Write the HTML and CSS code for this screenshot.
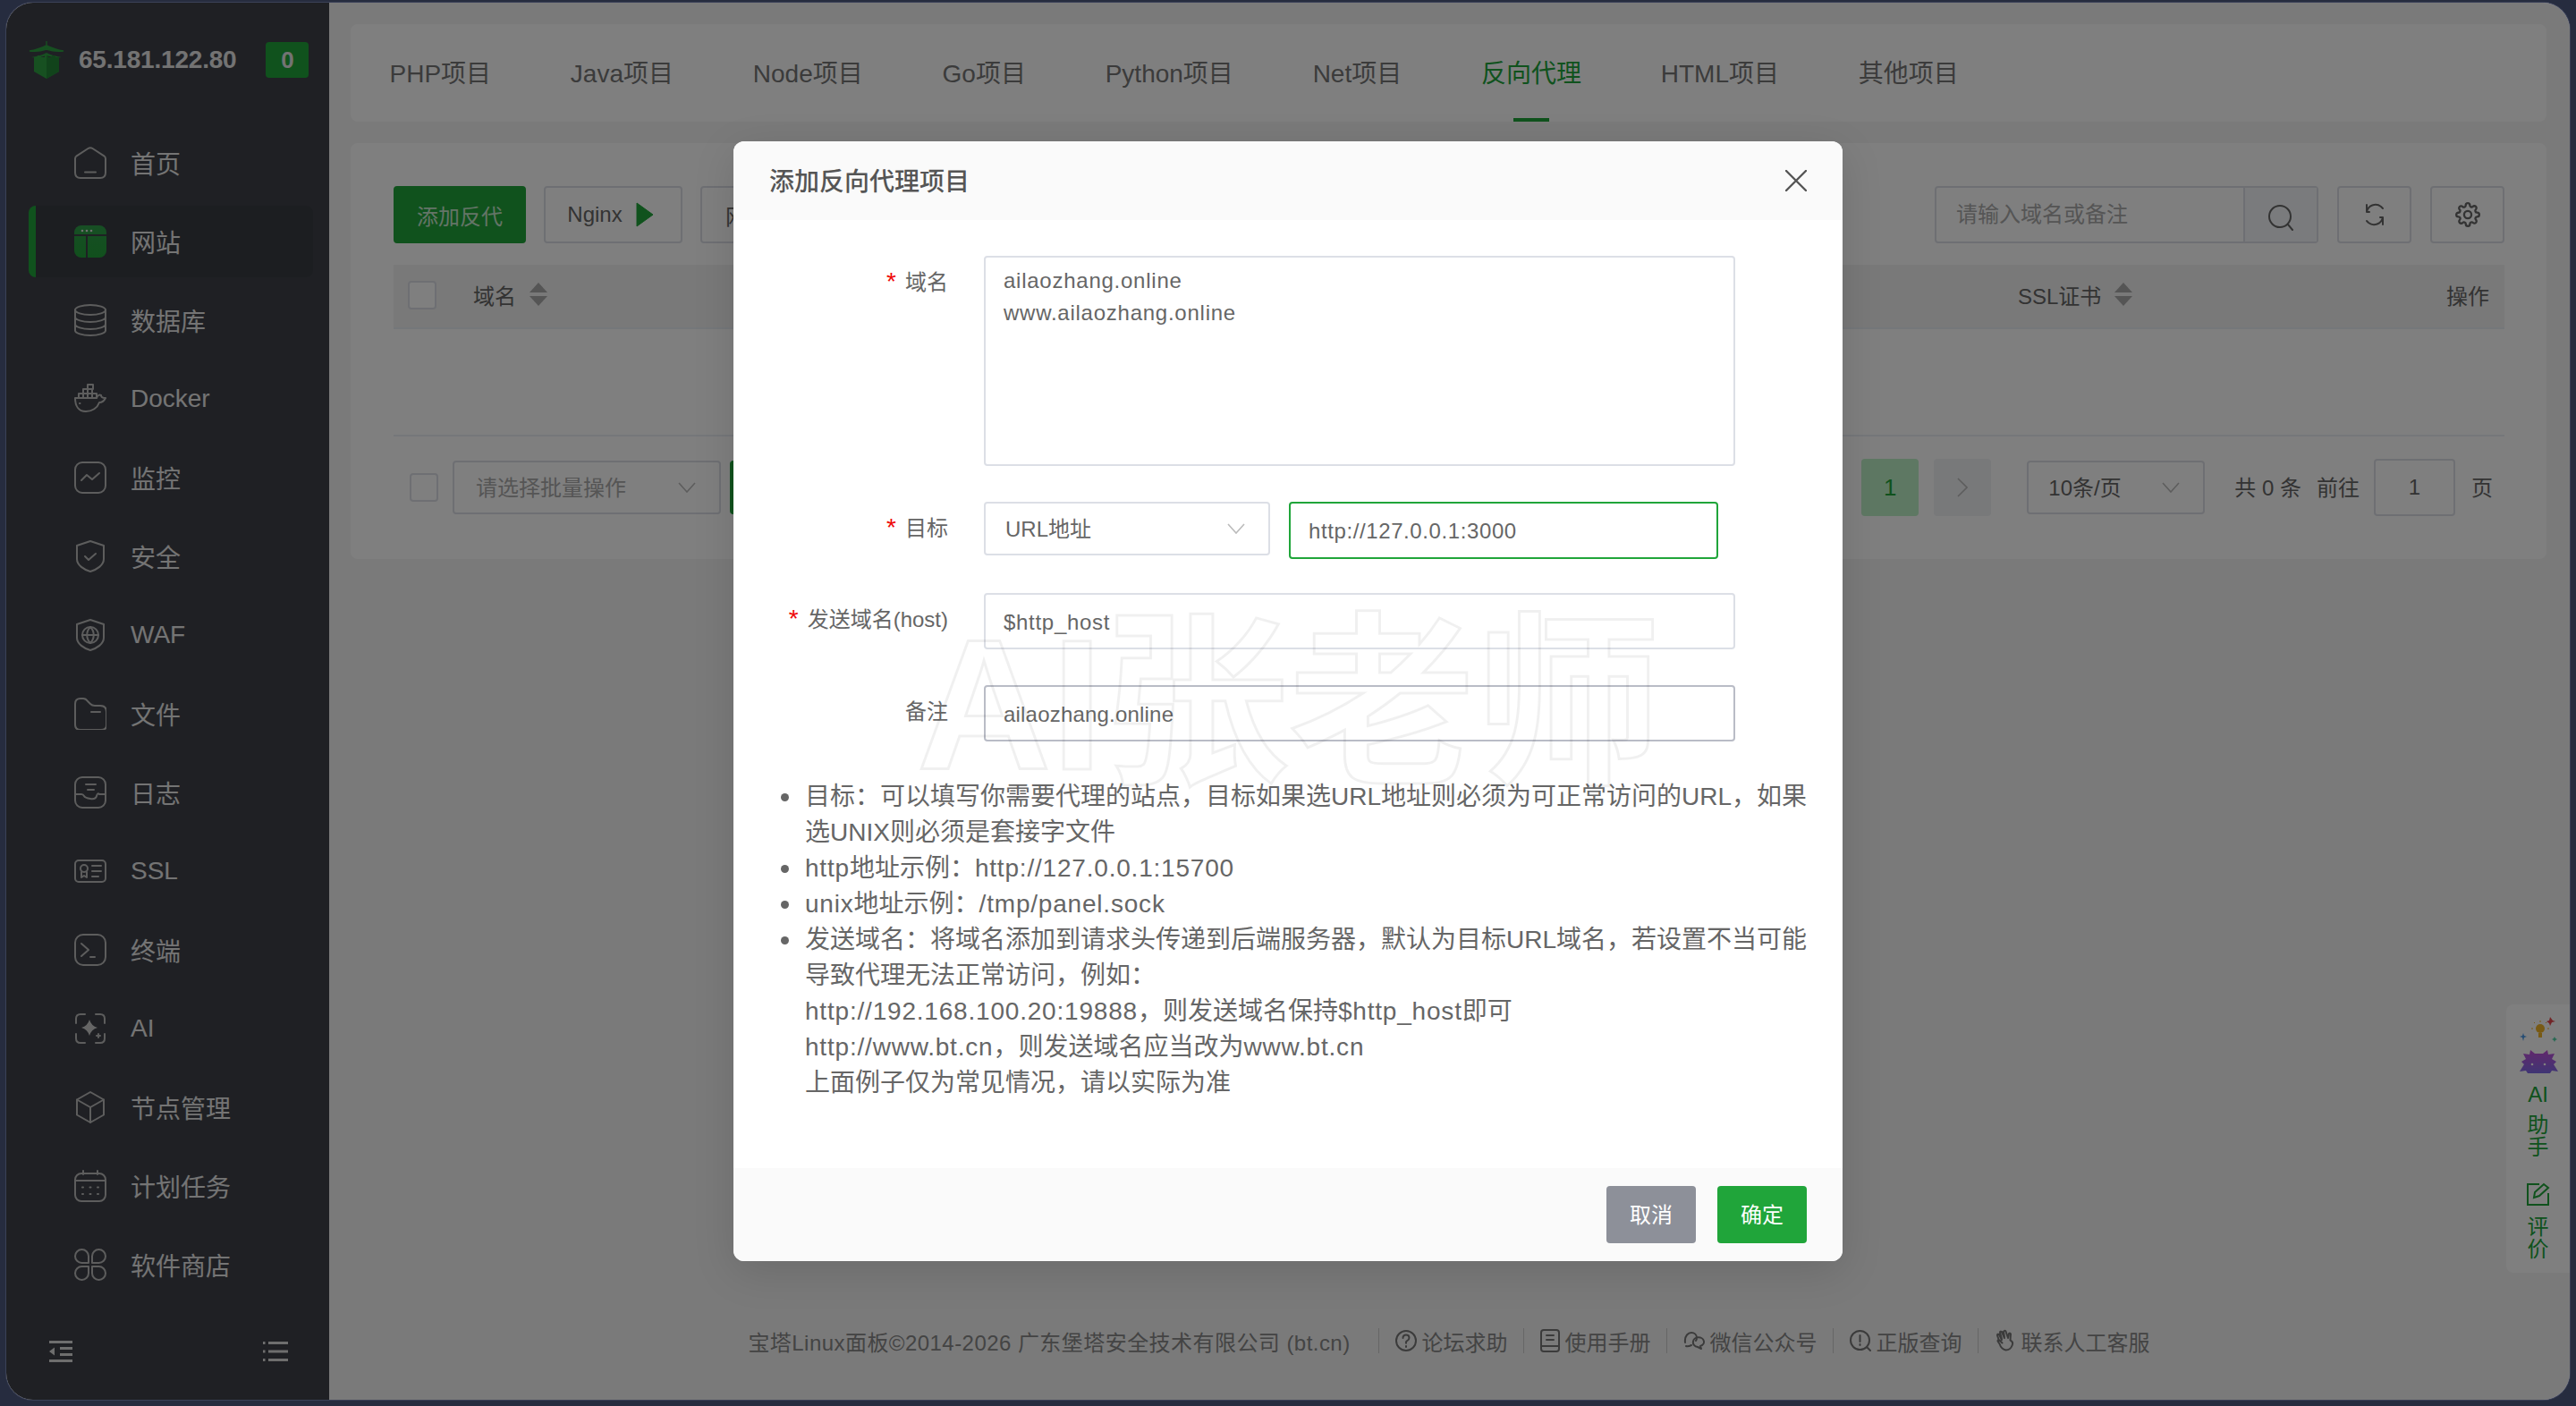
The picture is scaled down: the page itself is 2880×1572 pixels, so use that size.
FILE: index.html
```html
<!DOCTYPE html>
<html lang="zh-CN">
<head>
<meta charset="UTF-8">
<title>添加反向代理项目</title>
<link rel="stylesheet" href="styles.css">
</head>
<body>
<div class="window">
  <aside class="sidebar">
    <div class="brand">
      <svg class="brand-logo" viewBox="0 0 40 44">
        <path d="M20 1v5M1 12c8-1 13-3 19-6 6 3 11 5 19 6-7 1-13 0-19-2-6 2-12 3-19 2z" fill="#2ea043" stroke="#2ea043" stroke-width="1.4"/>
        <path d="M3 19c6-1 11-2 17-5 6 3 11 4 17 5-6 1-11 0-17-2-6 2-11 3-17 2z" fill="#2ea043"/>
        <path d="M6 19h4v-2h4v2h4v-2h4v2h4v-2h4v2h4v16l-14 8-14-8z" fill="#2ea043"/>
        <path d="M20 17h2v2h4v-2h4v2h4v16l-14 8z" fill="#238636"/>
      </svg>
      <span class="brand-ip">65.181.122.80</span>
      <span class="brand-badge">0</span>
    </div>
    <nav class="nav">
      <a class="nav-item">
        <svg class="nav-ico" viewBox="0 0 36 36"><path d="M1 13.500q0-2 1.700-3.200L15.500 2q2.500-1.600 5 0l12.800 8.300q1.700 1.200 1.700 3.200V29q0 6-6 6H7q-6 0-6-6z"/><path d="M12 28.500h12"/></svg>
        首页
      </a>
      <a class="nav-item active">
        <svg class="nav-ico" viewBox="0 0 36 36"><defs><linearGradient id="g1" x1="0" y1="0" x2="0" y2="1"><stop offset="0" stop-color="#2f9e49"/><stop offset="1" stop-color="#22a03a"/></linearGradient></defs><rect class="solid" x="0" y="0" width="36" height="36" rx="8" fill="url(#g1)"/><path class="cut" d="M0 11h36M14 11v25"/><circle class="cut-dot" cx="9" cy="6" r="1.300"/><circle class="cut-dot" cx="14" cy="6" r="1.300"/><circle class="cut-dot" cx="19" cy="6" r="1.300"/></svg>
        网站
      </a>
      <a class="nav-item">
        <svg class="nav-ico" viewBox="0 0 36 36"><ellipse cx="18" cy="6.500" rx="17" ry="5.500"/><path d="M1 6.500v23c0 3 8 5.500 17 5.500s17-2.500 17-5.500v-23M1 14.500c0 3 8 5.500 17 5.500s17-2.500 17-5.500M1 22.500c0 3 8 5.500 17 5.500s17-2.500 17-5.500"/></svg>
        数据库
      </a>
      <a class="nav-item">
        <svg class="nav-ico" viewBox="0 0 36 36"><path d="M1 17h24c1-3 3-4 5-3 0 2 2 3 5 3-2 4-4 5-7 5-2 6-8 10-15 10-8 0-12-6-12-15z"/><path d="M5 17v-5h5v-5h5V2h6v5h-6M10 12h15v5M10 12v5M15 7v10M20 7v10M6 23h.5"/></svg>
        Docker
      </a>
      <a class="nav-item">
        <svg class="nav-ico" viewBox="0 0 36 36"><rect x="1" y="1" width="34" height="34" rx="8"/><path d="M8 21l6-6 6 5 8-7"/></svg>
        监控
      </a>
      <a class="nav-item">
        <svg class="nav-ico" viewBox="0 0 36 36"><path d="M18 1l15 5v15c0 7-8 12-15 14-7-2-15-7-15-14V6z"/><path d="M12 18l4 4 8-7"/></svg>
        安全
      </a>
      <a class="nav-item">
        <svg class="nav-ico" viewBox="0 0 36 36"><path d="M18 1l15 5v15c0 7-8 12-15 14-7-2-15-7-15-14V6z"/><circle cx="18" cy="18" r="9"/><path d="M9 18h18M18 9c-5 5-5 13 0 18M18 9c5 5 5 13 0 18"/></svg>
        WAF
      </a>
      <a class="nav-item">
        <svg class="nav-ico" viewBox="0 0 36 36"><path d="M1 7q0-6 6-6h3q3 0 5 3l3 3q2 2 5 2h6q7 0 7 7v15q0 5-6 5H7q-6 0-6-6z"/><path d="M19 16h10"/></svg>
        文件
      </a>
      <a class="nav-item">
        <svg class="nav-ico" viewBox="0 0 36 36"><rect x="1" y="1" width="34" height="34" rx="8"/><path d="M1 20h7q2 0 3 2t7 3 7-3 3-2h7M13 9h11M15 15h7"/></svg>
        日志
      </a>
      <a class="nav-item">
        <svg class="nav-ico" viewBox="0 0 36 36"><rect x="1" y="6" width="34" height="24" rx="4"/><circle cx="11" cy="15" r="4"/><path d="M8 19v6l3-2 3 2v-6M20 12h10M20 18h10M20 24h7"/></svg>
        SSL
      </a>
      <a class="nav-item">
        <svg class="nav-ico" viewBox="0 0 36 36"><rect x="1" y="1" width="34" height="34" rx="9"/><path d="M8 11l8 7-8 7M18 26h5"/></svg>
        终端
      </a>
      <a class="nav-item">
        <svg class="nav-ico" viewBox="0 0 36 36"><path d="M2 12V7q0-5 5-5h5M24 2h5q5 0 5 5v5M34 24v5q0 5-5 5h-5M12 34H7q-5 0-5-5v-5"/><path class="fill-soft" d="M17 8q2 7 9 9-7 2-9 9-2-7-9-9 7-2 9-9z"/><path d="M25 26h4M27 24v4"/></svg>
        AI
      </a>
      <a class="nav-item">
        <svg class="nav-ico" viewBox="0 0 36 36"><path d="M18 1l15 8.500v17L18 35 3 26.500v-17z"/><path d="M3 9.500L18 18l15-8.500M18 18v17"/></svg>
        节点管理
      </a>
      <a class="nav-item">
        <svg class="nav-ico" viewBox="0 0 36 36"><rect x="1" y="4" width="34" height="31" rx="7"/><path d="M1 12h34M10 1v4M26 1v4M9 19.500h1M17.500 19.500h1M26 19.500h1M9 27h1M17.500 27h1M26 27h1"/></svg>
        计划任务
      </a>
      <a class="nav-item">
        <svg class="nav-ico" viewBox="0 0 36 36"><path d="M16 16H8.500a7.500 7.500 0 1 1 7.500-7.500zM20 16h7.500A7.500 7.500 0 1 0 20 8.500zM16 20H8.500A7.500 7.500 0 1 0 16 27.500zM20 20h7.500A7.500 7.500 0 1 1 20 27.500z"/></svg>
        软件商店
      </a>
    </nav>
    <div class="sidebar-foot">
      <svg class="foot-ico" width="26" height="24" viewBox="0 0 26 24"><path d="M0 1.500h26M12 8.500h14M12 15.500h14M0 22.500h26"/><path class="foot-fill" d="M6 7.500v9l-6-4.500z"/></svg>
      <svg class="foot-ico" width="28" height="24" viewBox="0 0 28 24"><path d="M6 2.500h22M6 12h22M6 21.500h22M0 2.500h2.500M0 12h2.500M0 21.500h2.500"/></svg>
    </div>
  </aside>

  <main class="main">
    <div class="tabs">
      <a class="tab">PHP项目</a>
      <a class="tab">Java项目</a>
      <a class="tab">Node项目</a>
      <a class="tab">Go项目</a>
      <a class="tab">Python项目</a>
      <a class="tab">Net项目</a>
      <a class="tab active">反向代理</a>
      <a class="tab">HTML项目</a>
      <a class="tab">其他项目</a>
    </div>

    <section class="card">
      <div class="toolbar">
        <div class="toolbar-left">
          <button class="btn btn-green">添加反代</button>
          <button class="btn btn-nginx">Nginx
            <svg width="20" height="28" viewBox="0 0 20 28"><path d="M1 1l18 13L1 27z" fill="#20a53a" stroke="#20a53a" stroke-linejoin="round"/></svg>
          </button>
          <button class="btn btn-wide">网站分类设置</button>
        </div>
        <div class="toolbar-right">
          <div class="search">
            <span class="search-text">请输入域名或备注</span>
            <span class="search-btn">
              <svg class="line-ico" width="30" height="30" viewBox="0 0 30 30"><circle cx="14" cy="14" r="12"/><path d="M23 23l5 6"/></svg>
            </span>
          </div>
          <button class="btn btn-icon">
            <svg class="line-ico" width="26" height="28" viewBox="0 0 26 28"><path d="M4 11a10 10 0 0 1 16-6l2 2M22 17a10 10 0 0 1-16 6l-2-2M4 3v8h3M22 25v-8h-3"/></svg>
          </button>
          <button class="btn btn-icon">
            <svg class="line-ico" width="28" height="28" viewBox="0 0 24 24"><circle cx="12" cy="12" r="3.500"/><path d="M19.400 15a1.650 1.650 0 0 0 .33 1.820l.06.06a2 2 0 0 1 0 2.830 2 2 0 0 1-2.830 0l-.06-.06a1.650 1.650 0 0 0-1.820-.33 1.650 1.650 0 0 0-1 1.510V21a2 2 0 0 1-2 2 2 2 0 0 1-2-2v-.09A1.650 1.650 0 0 0 9 19.400a1.650 1.650 0 0 0-1.820.33l-.06.06a2 2 0 0 1-2.830 0 2 2 0 0 1 0-2.830l.06-.06a1.650 1.650 0 0 0 .33-1.820 1.650 1.650 0 0 0-1.510-1H3a2 2 0 0 1-2-2 2 2 0 0 1 2-2h.09A1.650 1.650 0 0 0 4.600 9a1.650 1.650 0 0 0-.33-1.820l-.06-.06a2 2 0 0 1 0-2.830 2 2 0 0 1 2.830 0l.06.06a1.650 1.650 0 0 0 1.820.33H9a1.650 1.650 0 0 0 1-1.510V3a2 2 0 0 1 2-2 2 2 0 0 1 2 2v.09a1.650 1.650 0 0 0 1 1.510 1.650 1.650 0 0 0 1.820-.33l.06-.06a2 2 0 0 1 2.830 0 2 2 0 0 1 0 2.830l-.06.06a1.650 1.650 0 0 0-.33 1.820V9a1.650 1.650 0 0 0 1.510 1H21a2 2 0 0 1 2 2 2 2 0 0 1-2 2h-.09a1.650 1.650 0 0 0-1.510 1z"/></svg>
          </button>
        </div>
      </div>

      <div class="table-head">
        <span class="check"></span>
        <span class="th th-name">域名<i class="sort"></i></span>
        <span class="th th-ssl">SSL证书<i class="sort"></i></span>
        <span class="th th-op">操作</span>
      </div>
      <div class="table-body"></div>

      <div class="table-foot">
        <div class="batch">
          <span class="check"></span>
          <div class="select select-batch">
            <span>请选择批量操作</span>
            <svg class="chev" width="20" height="12" viewBox="0 0 20 12"><path d="M1 1l9 10 9-10"/></svg>
          </div>
          <button class="btn btn-green btn-batch">执行</button>
        </div>
        <div class="pager">
          <span class="page current">1</span>
          <span class="page next">
            <svg class="chev" width="12" height="22" viewBox="0 0 12 22"><path d="M1 1l10 10L1 21"/></svg>
          </span>
          <div class="select select-size">
            <span>10条/页</span>
            <svg class="chev" width="20" height="12" viewBox="0 0 20 12"><path d="M1 1l9 10 9-10"/></svg>
          </div>
          <span class="pager-text total">共 0 条</span>
          <span class="pager-text goto">前往</span>
          <span class="page-input">1</span>
          <span class="pager-text page-unit">页</span>
        </div>
      </div>
    </section>

    <footer class="footer">
      <span class="copy">宝塔Linux面板©2014-2026 广东堡塔安全技术有限公司 (bt.cn)</span>
      <a class="foot-link">
        <svg class="line-ico" width="24" height="24" viewBox="0 0 24 24"><circle cx="12" cy="12" r="11"/><path d="M8.500 9q0-3.500 3.500-3.500t3.500 3.300q0 2-2 3t-1.500 3M12 18v1"/></svg>
        论坛求助
      </a>
      <a class="foot-link">
        <svg class="line-ico" width="22" height="26" viewBox="0 0 22 26"><rect x="1" y="1" width="20" height="24" rx="3"/><path d="M1 19h20M7 7h8M7 12h8"/></svg>
        使用手册
      </a>
      <a class="foot-link">
        <svg class="line-ico" width="24" height="24" viewBox="0 0 24 24"><path d="M2 14C1 6 6 3 9 3c3 0 6 2 6 6 0 1 0 2-1 3M9 17c-2 1-4 2-6 1M11 13a6 5 0 1 1 8 5l1 3-4-2a6 5 0 0 1-5-6z"/></svg>
        微信公众号
      </a>
      <a class="foot-link">
        <svg class="line-ico" width="24" height="24" viewBox="0 0 24 24"><circle cx="11.500" cy="11.500" r="10.500"/><path d="M11.500 6v7M11.500 16v1M19 19l4 4"/></svg>
        正版查询
      </a>
      <a class="foot-link">
        <svg class="line-ico" width="24" height="26" viewBox="0 0 24 26"><path d="M5 13L3 7q0-2 2-1l3 6M8 11L6 4q0-2 2-1l3 7M11 9L10 3q1-2 2.500-.5L15 10M15 10l1-5q1.500-1 2 .5l-.5 7q4 2 2 6-2 5-7 5-5-1-7-7l-2-3q0-2 2-1l3 3"/></svg>
        联系人工客服
      </a>
    </footer>

    <aside class="float-tools">
      <svg class="mascot" width="46" height="66" viewBox="0 0 46 66">
        <defs><linearGradient id="g2" x1="0" y1="0" x2="0" y2="1"><stop offset="0" stop-color="#c34fd8"/><stop offset="1" stop-color="#7f6be8"/></linearGradient></defs>
        <path d="M36 2l3 4 3 1-4 1-2 4-1-3-3-2 3-1z" fill="#e5484d"/>
        <path d="M6 20l1 3 3 1-3 1-1 4-1-4-3-1 3-1z" fill="#4c9be8"/>
        <path d="M41 24l1 2 2 1-2 1-1 2-1-2-2-1 2-1z" fill="#4fd1a5"/>
        <circle cx="25" cy="15" r="5" fill="#f0b429"/><path d="M23 20h4v5h-4z" fill="#f0b429"/>
        <path d="M25 6v2M17 15h-2M35 15h-2M19 9l-1-1M31 9l1-1" stroke="#f0b429" stroke-width="1"/>
        <path d="M2 63l5-8-3-3 5-3-3-6 7 1 1-5 5 4h9l5-4 1 5 7-1-3 6 5 3-3 3 5 8-7-1-2 3H11l-2-3z" fill="url(#g2)"/>
        <circle cx="16" cy="55" r="1.300" fill="#fff"/><circle cx="30" cy="55" r="1.300" fill="#fff"/>
      </svg>
      <span class="float-text float-ai">AI</span>
      <span class="float-text">助<br>手</span>
      <svg class="float-pen" width="26" height="26" viewBox="0 0 26 26"><path d="M14 2H1v23h23V12M8 17l1-6L19 2l5 4-10 9z"/></svg>
      <span class="float-text">评<br>价</span>
    </aside>
  </main>

  <div class="mask">
    <div class="modal">
      <div class="modal-head">
        <span class="modal-title">添加反向代理项目</span>
        <svg class="modal-close" width="24" height="24" viewBox="0 0 24 24"><path d="M1 1l22 22M23 1L1 23"/></svg>
      </div>
      <div class="modal-body">
        <div class="form-row">
          <label class="form-label"><em>*</em>域名</label>
          <textarea class="field field-area">ailaozhang.online
www.ailaozhang.online</textarea>
        </div>
        <div class="form-row row-target">
          <label class="form-label"><em>*</em>目标</label>
          <div class="select select-type">
            <span>URL地址</span>
            <svg class="chev" width="20" height="12" viewBox="0 0 20 12"><path d="M1 1l9 10 9-10"/></svg>
          </div>
          <input class="field field-url" value="http://127.0.0.1:3000">
        </div>
        <div class="form-row row-host">
          <label class="form-label"><em>*</em>发送域名(host)</label>
          <input class="field field-full field-host" value="$http_host">
        </div>
        <div class="form-row row-note">
          <label class="form-label">备注</label>
          <input class="field field-full field-hover" value="ailaozhang.online">
        </div>
        <ul class="tips">
          <li>目标：可以填写你需要代理的站点，目标如果选URL地址则必须为可正常访问的URL，如果选UNIX则必须是套接字文件</li>
          <li><span class="url">http</span>地址示例：<span class="url">http://127.0.0.1:15700</span></li>
          <li><span class="url">unix</span>地址示例：<span class="url">/tmp/panel.sock</span></li>
          <li>发送域名：将域名添加到请求头传递到后端服务器，默认为目标URL域名，若设置不当可能导致代理无法正常访问，例如：<br><span class="url">http://192.168.100.20:19888</span>，则发送域名保持<span class="url">$http_host</span>即可<br><span class="url">http://www.bt.cn</span>，则发送域名应当改为<span class="url">www.bt.cn</span><br>上面例子仅为常见情况，请以实际为准</li>
        </ul>
      </div>
      <div class="modal-foot">
        <button class="btn-modal btn-cancel">取消</button>
        <button class="btn-modal btn-ok">确定</button>
      </div>
    </div>
    <div class="watermark">AI张老师</div>
  </div>
</div>
</body>
</html>
```

FILE: styles.css
```css
* {
  box-sizing: border-box;
}

html, body {
  height: 100%;
  margin: 0;
}

body {
  padding: 3px 7px 7px;
  background-color: #262c3f;
  font-family: "Liberation Sans", "Noto Sans CJK SC", sans-serif;
  color: #666;
  overflow: hidden;
}

button, input, textarea {
  font: inherit;
}

.window {
  position: relative;
  display: flex;
  height: 100%;
  border-radius: 30px;
  overflow: hidden;
  background-color: #f5f5f5;
  box-shadow: 0 0 0 1px #3b4158;
}

/* sidebar */
.sidebar {
  display: flex;
  flex-direction: column;
  flex: none;
  width: 361px;
  background-color: #3e4148;
}

.brand {
  display: flex;
  align-items: center;
  height: 139px;
  padding: 0 0 11px 25px;
}

.brand-logo {
  width: 40px;
  height: 44px;
}

.brand-ip {
  margin-left: 16px;
  font-size: 28px;
  font-weight: 700;
  color: #e6e6e6;
  letter-spacing: -0.2px;
}

.brand-badge {
  width: 48px;
  height: 40px;
  margin-left: 33px;
  border-radius: 4px;
  background-color: #20a53a;
  color: #e6e6e6;
  font-size: 26px;
  font-weight: 700;
  line-height: 40px;
  text-align: center;
}

.nav {
  display: flex;
  flex-direction: column;
  gap: 8px;
}

.nav-item {
  display: flex;
  align-items: center;
  gap: 27px;
  height: 80px;
  margin: 0 18px 0 25px;
  padding-left: 43px;
  border-left: 8px solid transparent;
  border-radius: 8px;
  font-size: 28px;
  color: #e8e8e8;
}

.nav-item.active {
  border-left-color: #20a53a;
  background-color: #393c43;
}

.nav-ico {
  flex: none;
  width: 36px;
  height: 36px;
  fill: none;
  stroke: #bbb;
  stroke-width: 2;
  stroke-linecap: round;
  stroke-linejoin: round;
}

.nav-ico .solid {
  stroke: none;
}

.nav-ico .cut {
  stroke: #3e4148;
}

.nav-ico .cut-dot {
  fill: #e0e0e0;
  stroke: none;
}

.nav-ico .fill-soft {
  fill: #ccc;
  stroke: none;
}

.sidebar-foot {
  display: flex;
  justify-content: space-between;
  align-items: center;
  margin-top: auto;
  padding: 0 46px 42px 48px;
}

.foot-ico {
  fill: none;
  stroke: #ddd;
  stroke-width: 3;
}

.foot-ico .foot-fill {
  fill: #ddd;
  stroke: none;
}

/* main */
.main {
  display: flex;
  flex-direction: column;
  flex: 1;
  min-width: 0;
  padding: 24px 26px 0 24px;
}

.tabs {
  display: flex;
  height: 109px;
  border-radius: 8px;
  background-color: #fff;
}

.tab {
  position: relative;
  display: flex;
  align-items: center;
  padding: 0 44.400px 3px;
  font-size: 28px;
  color: #777;
}

.tab:first-child {
  padding-left: 43.500px;
}

.tab.active {
  color: #20a53a;
}

.tab.active::after {
  content: "";
  position: absolute;
  left: 50%;
  bottom: 0;
  width: 40px;
  height: 4px;
  margin-left: -20px;
  background-color: #20a53a;
}

.card {
  height: 465px;
  margin-top: 24px;
  padding: 48px 47px 0 48px;
  border-radius: 8px;
  background-color: #fff;
}

.toolbar {
  display: flex;
  justify-content: space-between;
  height: 64px;
}

.toolbar-left, .toolbar-right {
  display: flex;
}

.toolbar-left {
  gap: 20px;
}

.toolbar-right {
  gap: 21px;
}

.btn {
  display: flex;
  align-items: center;
  justify-content: center;
  height: 64px;
  padding: 0;
  border: 2px solid #dcdfe6;
  border-radius: 4px;
  background-color: #fff;
  font-size: 24px;
  color: #666;
}

.btn-green {
  width: 148px;
  border-color: #20a53a;
  background-color: #20a53a;
  color: #c8e8ce;
}

.btn-nginx {
  gap: 15px;
  width: 155px;
  padding-right: 6px;
}

.btn-wide {
  width: 200px;
}

.btn-icon {
  width: 83px;
}

.line-ico {
  flex: none;
  fill: none;
  stroke: #666;
  stroke-width: 2;
  stroke-linecap: round;
  stroke-linejoin: round;
}

.search {
  display: flex;
  width: 429px;
  height: 64px;
  border: 2px solid #dcdfe6;
  border-radius: 4px;
}

.search-text {
  flex: 1;
  padding-left: 22px;
  font-size: 24px;
  line-height: 60px;
  color: #aaa;
}

.search-btn {
  display: flex;
  align-items: center;
  justify-content: center;
  width: 82px;
  border-left: 2px solid #dcdfe6;
  background-color: #f5f7fa;
  padding-top: 6px;
}

.table-head {
  position: relative;
  display: flex;
  align-items: center;
  height: 72px;
  margin-top: 24px;
  padding: 0 0 2px 16px;
  border-bottom: 2px solid #ebeef5;
  background-color: #f2f2f2;
}

.check {
  flex: none;
  width: 32px;
  height: 32px;
  border: 2px solid #dcdfe6;
  border-radius: 4px;
  background-color: #fff;
}

.th {
  display: flex;
  align-items: center;
  padding-bottom: 2px;
  font-size: 24px;
  color: #666;
}

.th-name {
  margin-left: 41px;
}

.th-ssl {
  position: absolute;
  left: 1816px;
}

.th-op {
  position: absolute;
  right: 17px;
}

.sort {
  position: relative;
  width: 20px;
  height: 26px;
  margin-left: 15px;
}

.sort::before, .sort::after {
  content: "";
  position: absolute;
  left: 0;
  border-left: 10px solid transparent;
  border-right: 10px solid transparent;
}

.sort::before {
  top: 0;
  border-bottom: 11px solid #aaa;
}

.sort::after {
  bottom: 0;
  border-top: 11px solid #aaa;
}

.table-body {
  height: 120px;
  border-bottom: 2px solid #ebeef5;
}

.table-foot {
  display: flex;
  justify-content: space-between;
  align-items: center;
  height: 66px;
  margin-top: 24px;
}

.batch {
  display: flex;
  align-items: center;
  gap: 16px;
  padding-left: 18px;
}

.select {
  display: flex;
  align-items: center;
  justify-content: space-between;
  border: 2px solid #dcdfe6;
  border-radius: 4px;
  font-size: 24px;
  background-color: #fff;
}

.select span {
  padding-bottom: 3px;
}

.chev {
  flex: none;
  fill: none;
  stroke: #bbb;
  stroke-width: 1.600;
}

.select-batch {
  width: 300px;
  height: 60px;
  padding: 0 26px 0 24px;
  color: #aaa;
}

.btn-batch {
  width: 120px;
  height: 60px;
  margin-left: -6px;
}

.pager {
  display: flex;
  align-items: center;
  font-size: 24px;
  padding-right: 13px;
}

.pager-text {
  padding-bottom: 4px;
}

.page {
  display: flex;
  align-items: center;
  justify-content: center;
  width: 64px;
  height: 64px;
  border-radius: 4px;
  background-color: #f0f2f5;
}

.page.current {
  background-color: #bcf0c6;
  color: #20a53a;
  font-size: 26px;
}

.page.next {
  margin-left: 17px;
}

.select-size {
  width: 199px;
  height: 60px;
  margin-left: 40px;
  padding: 0 26px 0 22px;
}

.total {
  margin-left: 33px;
}

.goto {
  margin-left: 17px;
}

.page-input {
  width: 91px;
  height: 64px;
  margin-left: 16px;
  border: 2px solid #dcdfe6;
  border-radius: 4px;
  background-color: #fff;
  line-height: 60px;
  text-align: center;
}

.page-unit {
  margin-left: 18px;
}

.footer {
  display: flex;
  justify-content: center;
  align-items: center;
  height: 28px;
  margin-top: auto;
  margin-bottom: 52px;
  padding-left: 18px;
  font-size: 24px;
  color: #888;
}

.copy {
  padding-right: 31px;
  letter-spacing: 0.450px;
}

.foot-link {
  display: flex;
  align-items: center;
  gap: 6px;
  height: 28px;
  padding: 0 17px 0 18px;
  border-left: 1px solid #ccc;
  color: #888;
}

.foot-link .line-ico {
  stroke: #777;
}

.float-tools {
  position: absolute;
  right: 0;
  top: 1120px;
  display: flex;
  flex-direction: column;
  align-items: center;
  width: 71px;
  height: 300px;
  padding-top: 12px;
  border-radius: 8px 0 0 8px;
  background-color: #fff;
  color: #20a53a;
}

.float-text {
  font-size: 24px;
  line-height: 25px;
  text-align: center;
}

.float-ai {
  margin: 10px 0 9px;
}

.float-pen {
  margin: 27px 0 11px;
  fill: none;
  stroke: #20a53a;
  stroke-width: 2;
}

/* modal */
.mask {
  position: absolute;
  inset: 0;
  display: flex;
  align-items: center;
  justify-content: center;
  background-color: rgba(0, 0, 0, 0.5);
}

.modal {
  display: flex;
  flex-direction: column;
  width: 1240px;
  height: 1252px;
  border-radius: 12px;
  overflow: hidden;
  background-color: #fff;
  box-shadow: 0 12px 48px rgba(0, 0, 0, 0.12);
}

.modal-head {
  display: flex;
  align-items: center;
  justify-content: space-between;
  flex: none;
  height: 88px;
  padding: 0 40px;
  background-color: #fafafa;
}

.modal-title {
  padding-bottom: 3px;
  font-size: 28px;
  font-weight: 500;
  color: #555;
}

.modal-close {
  fill: none;
  stroke: #555;
  stroke-width: 2.400;
  stroke-linecap: round;
}

.modal-body {
  flex: 1;
  padding-top: 40px;
}

.form-row {
  display: flex;
  align-items: flex-start;
}

.form-label {
  flex: none;
  width: 280px;
  padding: 10px 40px 0 0;
  font-size: 24px;
  line-height: 40px;
  text-align: right;
  color: #666;
}

.form-label em {
  margin-right: 10px;
  font-style: normal;
  font-size: 28px;
  line-height: 20px;
  color: #ef0808;
}

.field {
  display: block;
  border: 2px solid #dcdfe6;
  border-radius: 4px;
  font-size: 24px;
  color: #666;
  outline: none;
  background: transparent;
}

.field-area {
  width: 840px;
  height: 235px;
  padding: 8px 20px;
  line-height: 36px;
  letter-spacing: 0.750px;
  resize: none;
}

.row-target {
  margin-top: 40px;
}

.select-type {
  width: 320px;
  height: 60px;
  padding: 0 26px 0 22px;
  color: #666;
}

.field-url {
  width: 480px;
  height: 64px;
  margin-left: 21px;
  padding: 2px 20px 0;
  border-color: #20a53a;
  letter-spacing: 0.600px;
}

.row-host {
  margin-top: 38px;
}

.row-note {
  margin-top: 40px;
}

.field-full {
  width: 840px;
  height: 63px;
  padding: 2px 20px 0;
}

.field-host {
  letter-spacing: 0.700px;
}

.field-hover {
  border-color: #b9bcc6;
  letter-spacing: 0.200px;
}

.tips {
  margin: 42px 0 0;
  padding: 0 36px 0 80px;
  list-style: none;
  font-size: 28px;
  line-height: 40px;
  color: #666;
}

.tips li {
  position: relative;
}

.tips li::before {
  content: "";
  position: absolute;
  left: -27px;
  top: 16px;
  width: 9px;
  height: 9px;
  border-radius: 50%;
  background-color: #666;
}

.url {
  letter-spacing: 0.800px;
}

.modal-foot {
  display: flex;
  justify-content: flex-end;
  gap: 24px;
  flex: none;
  height: 104px;
  padding: 20px 40px;
  background-color: #fafafa;
}

.btn-modal {
  width: 100px;
  height: 64px;
  padding: 0 0 3px;
  border: 0;
  border-radius: 4px;
  font-size: 24px;
  color: #fff;
}

.btn-cancel {
  background-color: #8d9099;
}

.btn-ok {
  background-color: #20a53a;
}

.watermark {
  position: absolute;
  left: 1018px;
  top: 645px;
  font-size: 208px;
  line-height: 280px;
  white-space: nowrap;
  font-weight: 700;
  color: transparent;
  -webkit-text-stroke: 3px rgba(0, 0, 0, 0.06);
  pointer-events: none;
}
```
